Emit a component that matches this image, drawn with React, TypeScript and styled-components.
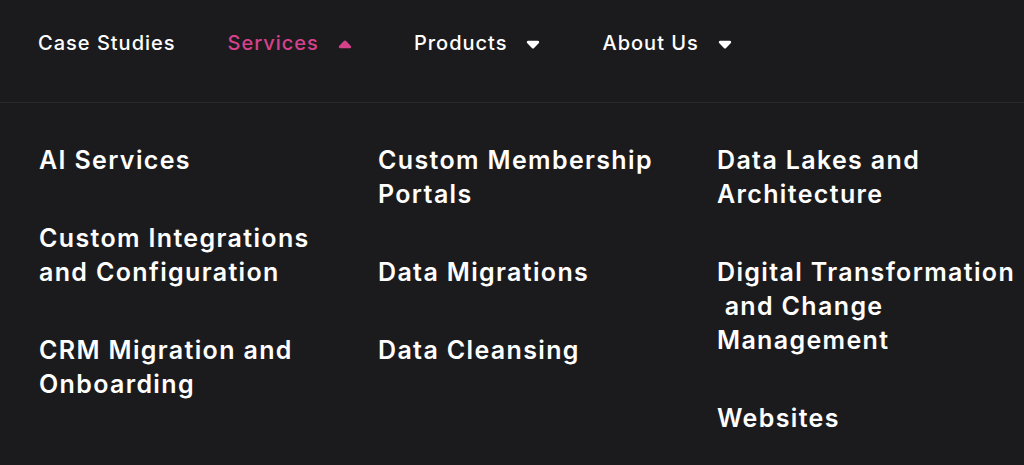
import React from "react";
import styled, { createGlobalStyle } from "styled-components";

const GlobalStyle = createGlobalStyle`
  html, body {
    margin: 0;
    padding: 0;
    background: #1b1b1d;
  }
  body {
    font-family: Inter, "Liberation Sans", sans-serif;
    -webkit-font-smoothing: antialiased;
  }
`;

const navItems = [
  { label: "Case Studies", caret: null as null | "up" | "down" },
  { label: "Services", caret: "up" as const, active: true },
  { label: "Products", caret: "down" as const },
  { label: "About Us", caret: "down" as const },
];

const columns: string[][][] = [
  [["AI Services"], ["Custom Integrations", "and Configuration"], ["CRM Migration and", "Onboarding"]],
  [["Custom Membership", "Portals"], ["Data Migrations"], ["Data Cleansing"]],
  [
    ["Data Lakes and", "Architecture"],
    ["Digital Transformation", "\u00a0and Change", "Management"],
    ["Websites"],
  ],
];

const Caret = ({ dir }: { dir: "up" | "down" }) => (
  <CaretIcon viewBox="0 0 14 9" $dir={dir}>
    <path d="M2.2 8.2h9.6c1.2 0 1.8-1.3 1.1-2.2L8.1 1.1c-.6-.7-1.6-.7-2.2 0L1.1 6c-.7.9-.1 2.2 1.1 2.2z" fill="currentColor" />
  </CaretIcon>
);

export default function App() {
  return (
    <Page>
      <GlobalStyle />
      <Header>
        <Nav>
          {navItems.map((item) => (
            <NavItem key={item.label} $active={!!item.active}>
              <span>{item.label}</span>
              {item.caret && <Caret dir={item.caret} />}
            </NavItem>
          ))}
        </Nav>
      </Header>
      <Menu>
        {columns.map((col, i) => (
          <Column key={i}>
            {col.map((lines) => (
              <MenuLink key={lines.join(" ")} href="#">
                {lines.map((line, j) => (
                  <Line key={j}>{line}</Line>
                ))}
              </MenuLink>
            ))}
          </Column>
        ))}
      </Menu>
    </Page>
  );
}

const Page = styled.div`
  width: 1024px;
  height: 465px;
  overflow: hidden;
  background: #1b1b1d;
`;

const Header = styled.header`
  height: 103px;
  border-bottom: 1px solid #2a2a2d;
  box-sizing: border-box;
`;

const Nav = styled.nav`
  display: flex;
  align-items: center;
  height: 86px;
  padding-left: 38px;
  gap: 52px;
`;

const NavItem = styled.a<{ $active: boolean }>`
  display: flex;
  align-items: center;
  gap: 19px;
  font-size: 20px;
  font-weight: 500;
  letter-spacing: 1px;
  color: ${(p) => (p.$active ? "#d6418b" : "#ffffff")};
  cursor: pointer;
`;

const CaretIcon = styled.svg<{ $dir: "up" | "down" }>`
  width: 14px;
  height: 9px;
  margin: 3px 10px 0 0;
  transform: ${(p) => (p.$dir === "down" ? "rotate(180deg)" : "none")};
`;

const Menu = styled.div`
  display: grid;
  grid-template-columns: repeat(3, 339px);
  padding: 40px 0 0 39px;
`;

const Column = styled.div`
  display: flex;
  flex-direction: column;
  gap: 44px;
`;

const MenuLink = styled.a`
  display: flex;
  flex-direction: column;
  color: #ffffff;
  text-decoration: none;
  font-size: 25px;
  font-weight: 600;
  line-height: 34px;
  letter-spacing: 1.35px;
`;

const Line = styled.span`
  white-space: pre;
`;
